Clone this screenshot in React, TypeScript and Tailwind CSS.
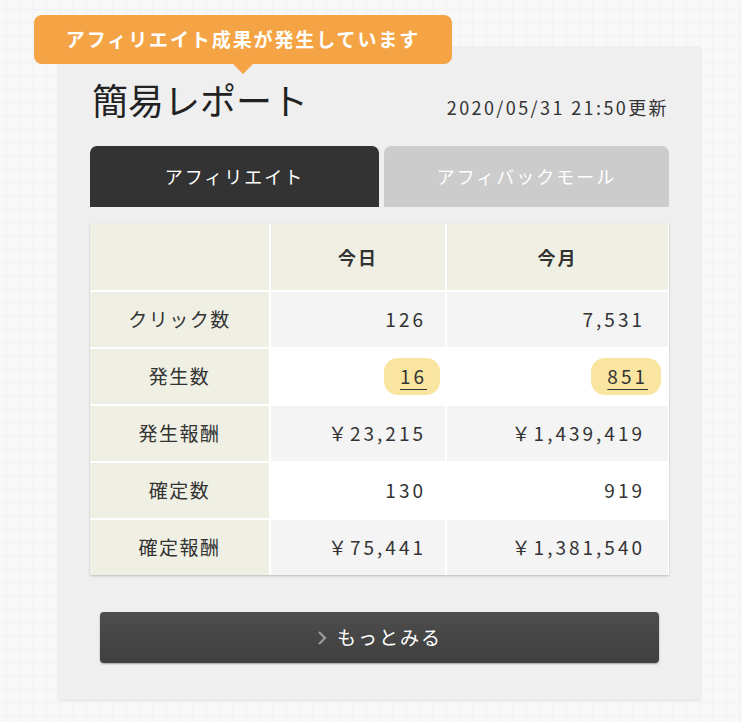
import React from "react";

type Row = { label: string; today: string; month: string; hl?: boolean };

const rows: Row[] = [
  { label: "クリック数", today: "126", month: "7,531" },
  { label: "発生数", today: "16", month: "851", hl: true },
  { label: "発生報酬", today: "￥23,215", month: "￥1,439,419" },
  { label: "確定数", today: "130", month: "919" },
  { label: "確定報酬", today: "￥75,441", month: "￥1,381,540" },
];

function Value({ v, hl, col3 }: { v: string; hl?: boolean; col3?: boolean }) {
  if (hl) {
    return (
      <span className="h-[37px] pl-4 pr-[13px] rounded-[14px] bg-[#fae5a0] flex items-center underline underline-offset-[5px] decoration-1">
        {v}
      </span>
    );
  }
  return <span className={col3 ? "pl-4 pr-[16px]" : "pl-4 pr-[14px]"}>{v}</span>;
}

export default function App() {
  return (
    <div className="min-h-screen w-full bg-[#f8f8f8] [background-image:linear-gradient(#f1f1f1_1px,transparent_1px),linear-gradient(90deg,#f1f1f1_1px,transparent_1px)] [background-size:13.33px_13.33px] [background-position:6px_9px] font-['Noto_Sans_CJK_JP','Noto_Sans',sans-serif] text-[#333] pt-[46px] pb-[22px]">
      <div className="relative ml-[57px] w-[645px] h-[654px] bg-[#efefef] rounded-[4px] shadow-[0_1px_1px_rgba(0,0,0,0.08)] px-[33px] pt-[33px]">
        {/* badge */}
        <div className="absolute left-[-23px] top-[-31px] w-[418px] h-[49px] rounded-[8px] bg-[#f4a444] flex items-center justify-center text-white font-bold text-[19px] tracking-[1.9px]">
          アフィリエイト成果が発生しています
          <span className="absolute left-[199px] bottom-[-10px] w-0 h-0 border-l-[10px] border-r-[10px] border-t-[10px] border-l-transparent border-r-transparent border-t-[#f4a444]" />
        </div>

        {/* title row */}
        <div className="flex items-end justify-between h-[40px]">
          <h1 className="text-[36px] leading-[40px] font-normal text-[#222] ml-[2px]">簡易レポート</h1>
          <div className="text-[18px] leading-[20px] tracking-[2.4px] mb-[2px] mr-0">2020/05/31 21:50更新</div>
        </div>

        {/* tabs */}
        <div className="flex gap-[5px] mt-[27px] h-[61px]">
          <div className="w-[289px] rounded-t-[7px] bg-[#333333] text-white text-[18px] tracking-[2px] flex items-center justify-center">
            アフィリエイト
          </div>
          <div className="flex-1 rounded-t-[7px] bg-[#cccccc] text-white text-[18px] tracking-[2px] flex items-center justify-center">
            アフィバックモール
          </div>
        </div>

        {/* table */}
        <div className="mt-[17px] grid grid-cols-[179px_174px_221px] gap-[2px] bg-white shadow-[0_1px_2px_rgba(0,0,0,0.22)]">
          <div className="h-[66px] bg-[#efefe3]" />
          <div className="h-[66px] bg-[#efefe3] flex items-center justify-center font-bold text-[18px] tracking-[2px]">今日</div>
          <div className="h-[66px] bg-[#efefe3] flex items-center justify-center font-bold text-[18px] tracking-[2px]">今月</div>
          {rows.map((r, i) => {
            const bg = i % 2 === 0 ? "bg-[#f4f4f4]" : "bg-white";
            return (
              <React.Fragment key={r.label}>
                <div className="h-[55px] bg-[#efefe3] flex items-center justify-center text-[19px] tracking-[1.5px]">
                  {r.label}
                </div>
                <div className={`h-[55px] ${bg} flex items-center justify-end pr-[5px] text-[19px] tracking-[3px]`}>
                  <Value v={r.today} hl={r.hl} />
                </div>
                <div className={`h-[55px] ${bg} flex items-center justify-end pr-[7px] text-[19px] tracking-[3px]`}>
                  <Value v={r.month} hl={r.hl} col3 />
                </div>
              </React.Fragment>
            );
          })}
        </div>

        {/* button */}
        <div className="mt-[37px] mx-[10px] h-[51px] rounded-[4px] bg-[linear-gradient(#4d4d4d,#3f3f3f)] shadow-[0_1px_2px_rgba(0,0,0,0.35)] flex items-center justify-center text-white text-[19px] tracking-[2px]">
          <svg width="10" height="16" viewBox="0 0 10 16" className="mr-[10px]">
            <polyline points="2,2 8,8 2,14" fill="none" stroke="#9a9a9a" strokeWidth="2.2" />
          </svg>
          もっとみる
        </div>
      </div>
    </div>
  );
}
